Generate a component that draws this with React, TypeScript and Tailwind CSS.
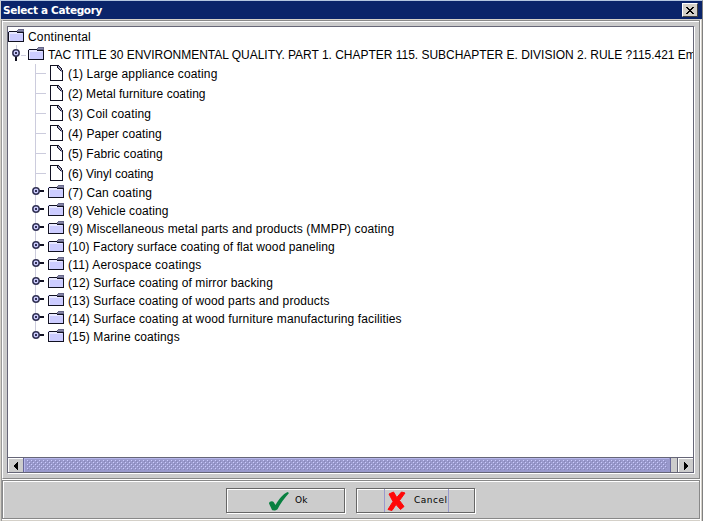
import React from "react";

const rowFont = "font-['Liberation_Sans',Arial,sans-serif] text-[12px] leading-[18px] whitespace-nowrap text-black";

function Folder() {
  return (
    <svg width="16" height="14" viewBox="0 0 16 14" shapeRendering="crispEdges" className="mb-[2px] block shrink-0">
      <path d="M0 2h9v1h7v10H0z" fill="#ccccff" />
      <path d="M1 3h8v1h5v1H2v7H1z" fill="#e8e8ff" />
      <path d="M9 1h1V0h6v4h-6V3H9z" fill="#666688" />
      <path d="M10 1h5v1h-5z" fill="#8888aa" />
      <path d="M1 2h8v1H1zM0 3h1v10H0zM1 12h15v1H1zM15 3h1v10h-1zM9 3h6v1H9z" fill="#111122" />
    </svg>
  );
}

function Doc() {
  return (
    <svg width="14" height="16" viewBox="0 0 14 16" shapeRendering="crispEdges" className="mb-[2px] block shrink-0">
      <path d="M1 1h7l5 5v9H1z" fill="#fff" />
      <path d="M8 1h1v1h1v1h1v1h1v1h1v2h-2V5h-1V4H9V3H8z" fill="#9999bb" />
      <path d="M0 0h9v1H1v14h11V7h1v9H0zM9 1h1v1H9zM10 2h1v1h-1zM11 3h1v2h-1zM12 5h1v3h-1zM7 1h1v2H7zM8 3h1v1H8zM9 4h1v1H9zM10 5h1v1h-1z" fill="#111122" />
    </svg>
  );
}

function Handle({ open = false }: { open?: boolean }) {
  return (
    <svg width="12" height="12" viewBox="0 0 12 12" className={open ? "block shrink-0 rotate-90" : "block shrink-0"}>
      <path d="M7 4h5v2H7z" fill="#111122" shapeRendering="crispEdges" />
      <circle cx="4" cy="5" r="3.2" fill="#ccccff" stroke="#333355" strokeWidth="1.5" />
      <path d="M3 4h2v2H3z" fill="#333355" shapeRendering="crispEdges" />
    </svg>
  );
}

const leaves = [
  { text: "(1) Large appliance coating", cls: "tracking-[0.15px]" },
  { text: "(2) Metal furniture coating", cls: "tracking-[0.03px]" },
  { text: "(3) Coil coating", cls: "tracking-[0.15px]" },
  { text: "(4) Paper coating", cls: "tracking-[0.1px]" },
  { text: "(5) Fabric coating", cls: "tracking-[0.08px]" },
  { text: "(6) Vinyl coating", cls: "tracking-[-0.02px]" },
];

const folders = [
  { text: "(7) Can coating", cls: "tracking-[0.13px]" },
  { text: "(8) Vehicle coating", cls: "tracking-[0.09px]" },
  { text: "(9) Miscellaneous metal parts and products (MMPP) coating", cls: "tracking-[0.13px]" },
  { text: "(10) Factory surface coating of flat wood paneling", cls: "tracking-[0.08px]" },
  { text: "(11) Aerospace coatings", cls: "tracking-[0.22px]" },
  { text: "(12) Surface coating of mirror backing", cls: "tracking-[0.11px]" },
  { text: "(13) Surface coating of wood parts and products", cls: "tracking-[0.115px]" },
  { text: "(14) Surface coating at wood furniture manufacturing facilities", cls: "tracking-[0.12px]" },
  { text: "(15) Marine coatings", cls: "tracking-[0.12px]" },
];

function Tree() {
  return (
    <div className="relative min-h-0 flex-1 overflow-hidden bg-white">
      <div className="absolute left-[27px] top-[37px] h-[273px] w-px bg-[#ccccdd]" />
      <div className="absolute left-[8px] top-[18px] h-[4px] w-px bg-[#ccccdd]" />
      <div className="relative flex flex-col pt-px">
        <div className="flex h-[18px] items-center">
          <Folder />
          <span className={`${rowFont} ml-[4px] tracking-[0.2px]`}>Continental</span>
        </div>
        <div className="flex h-[18px] items-center">
          <div className="ml-px mr-[2px] flex w-[17px] shrink-0 items-center">
            <Handle open />
            <div className="h-px flex-1 bg-[#ccccdd]" />
          </div>
          <Folder />
          <span className={`${rowFont} ml-[4px] tracking-[-0.02px]`}>
            TAC TITLE 30 ENVIRONMENTAL QUALITY. PART 1. CHAPTER 115. SUBCHAPTER E. DIVISION 2. RULE ?115.421 Em
          </span>
        </div>
        {leaves.map((r) => (
          <div key={r.text} className="flex h-[20px] items-center">
            <div className="mb-[2px] ml-[28px] mr-[4px] h-px w-[10px] bg-[#ccccdd]" />
            <Doc />
            <span className={`${rowFont} ml-[4px] ${r.cls}`}>{r.text}</span>
          </div>
        ))}
        {folders.map((r) => (
          <div key={r.text} className="flex h-[18px] items-center">
            <div className="mb-[2px] ml-[24px] w-[16px]">
              <Handle />
            </div>
            <Folder />
            <span className={`${rowFont} ml-[4px] ${r.cls}`}>{r.text}</span>
          </div>
        ))}
      </div>
    </div>
  );
}

function ScrollBar() {
  return (
    <div className="flex h-[16px] shrink-0 border-y border-[#666677] bg-[#cccccc]">
      <div className="flex w-[15px] items-center justify-center border-l border-t border-white">
        <svg width="4" height="8" viewBox="0 0 4 8" shapeRendering="crispEdges">
          <path d="M3 0h1v8H3zM2 1h1v6H2zM1 2h1v4H1zM0 3h1v2H0z" />
        </svg>
      </div>
      <div className="flex-1 border-x border-[#666699] bg-[#9999cc]">
        <svg width="100%" height="14" shapeRendering="crispEdges" className="block">
          <defs>
            <pattern id="bumps" x="3" y="2" width="4" height="4" patternUnits="userSpaceOnUse">
              <path d="M0 0h1v1H0zM2 2h1v1H2z" fill="#ccccff" />
              <path d="M1 1h1v1H1zM3 3h1v1H3z" fill="#666699" fillOpacity=".4" />
            </pattern>
          </defs>
          <path d="M0 0h645v1H1v13H0z" fill="#b8b8ec" />
          <rect x="3" y="2" width="640" height="10" fill="url(#bumps)" />
        </svg>
      </div>
      <div className="w-[7px] border-r border-[#666677]" />
      <div className="flex w-[15px] items-center justify-center border-l border-t border-white">
        <svg width="4" height="8" viewBox="0 0 4 8" shapeRendering="crispEdges">
          <path d="M0 0h1v8H0zM1 1h1v6H1zM2 2h1v4H2zM3 3h1v2H3z" />
        </svg>
      </div>
    </div>
  );
}

const btn = "h-[25px] border border-[#666666] shadow-[inset_1px_1px_0_#fff,1px_1px_0_#fff] font-['DejaVu_Sans',sans-serif] text-[9px] text-black";

export default function App() {
  return (
    <div className="flex h-[521px] w-[703px] flex-col overflow-hidden border-r border-t border-r-[#808080] border-t-[#b4c6e0] bg-[#d4d0c8]">
      <div className="ml-px flex h-[18px] shrink-0 items-center justify-between bg-[#0a246a] pl-[2px] pr-[4px]">
        <span className="font-['DejaVu_Sans','Liberation_Sans',sans-serif] text-[10.5px] font-bold leading-[18px] tracking-[-0.33px] text-white">
          Select a Category
        </span>
        <button className="flex h-[14px] w-[16px] items-center justify-center border border-b-[#404040] border-l-white border-r-[#404040] border-t-white bg-[#d4d0c8]">
          <svg width="8" height="7" viewBox="0 0 8 7" shapeRendering="crispEdges">
            <path d="M0 0h2v1H0zM6 0h2v1H6zM1 1h2v1H1zM5 1h2v1H5zM2 2h4v1H2zM3 3h2v1H3zM2 4h4v1H2zM1 5h2v1H1zM5 5h2v1H5zM0 6h2v1H0zM6 6h2v1H6z" />
          </svg>
        </button>
      </div>
      <div className="ml-px mr-px mt-px flex min-h-0 flex-1 flex-col border-l border-r border-l-[#999999] border-r-white">
        <div className="flex h-[459px] shrink-0 flex-col border border-b-[#888888] border-l-white border-r-[#888888] border-t-[#888888] bg-[#cccccc] pb-[5px] pl-[4px] pr-[5px] shadow-[inset_0_1px_0_#fff]">
          <div className="mt-[5px] flex min-h-0 flex-1 flex-col border border-b-0 border-[#666677] shadow-[1px_1px_0_#fff]">
            <Tree />
            <ScrollBar />
          </div>
        </div>
        <div className="h-px shrink-0 bg-white" />
        <div className="flex h-[39px] shrink-0 items-start gap-[11px] border border-[#888888] bg-[#cccccc] pl-[223px] pt-[7px] shadow-[inset_1px_1px_0_#fff,0_1px_0_#fff]">
          <button className={`${btn} flex w-[119px] items-center pl-[41px]`}>
            <svg width="22" height="20" viewBox="0 0 22 20" className="shrink-0">
              <path d="M1 12.5C1 10.5 4.5 9.5 5.6 11L7.5 14C11 8 15 3 19.5 1L21 2C16.5 7 12 13 9.5 18.2C8 19.5 4.5 20 3.8 18.5Z" fill="#088040" />
            </svg>
            <span className="ml-[5px] tracking-[0.1px]">Ok</span>
          </button>
          <button className={`${btn} flex w-[119px] items-stretch pl-[27px]`}>
            <span className="flex w-[65px] items-center border-x border-[#9999cc] pl-[2px]">
              <svg width="19" height="20" viewBox="0 0 19 20" className="shrink-0">
                <path d="M2 3L6.5 1L9.8 6.5L14.5 1L18 2L12.5 9.5L17 15.5L13.5 18.5L9 13.5L5 19.5L1 18.5L6 10.5Z" fill="#ff0808" stroke="#ff0808" strokeLinejoin="round" />
              </svg>
              <span className="ml-[8px] tracking-[0.5px]">Cancel</span>
            </span>
          </button>
        </div>
      </div>
    </div>
  );
}
